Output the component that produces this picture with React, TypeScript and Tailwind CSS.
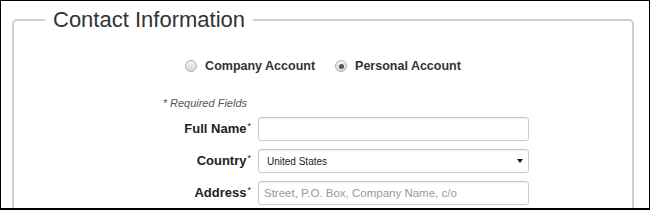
import React from 'react';

const Radio = ({ checked }: { checked?: boolean }) => (
  <span className="flex h-[12px] w-[12px] items-center justify-center rounded-full border border-[#b0b0b0] bg-gradient-to-b from-[#f4f4f4] to-[#d9d9d9]">
    {checked && <span className="h-[5px] w-[5px] rounded-full bg-[#555]" />}
  </span>
);

const Label = ({ text }: { text: string }) => (
  <label className="w-[237px] text-right text-[13px] font-bold text-[#222]">
    {text}
    <span className="relative top-[-4px] ml-[1px] text-[9px] font-normal">*</span>
  </label>
);

const inputClass =
  'h-[24px] w-[271px] rounded-[3px] border border-[#ccc] bg-white shadow-[inset_0_1px_1px_rgba(0,0,0,0.075)] outline-none';

export default function App() {
  return (
    <div
      className="h-[210px] w-[650px] overflow-hidden border-t border-r border-l border-b-2 border-black bg-white"
      style={{ fontFamily: '"Liberation Sans", Arial, sans-serif' }}
    >
      <fieldset className="ml-[11px] mt-[5px] h-[260px] w-[622px] rounded-[5px] border-2 border-[#cfcfcf]">
        <legend className="ml-[31px] px-2 text-[22px] leading-[27px] text-[#333]">Contact Information</legend>

        <div className="mt-[23px] flex h-[20px] items-center justify-center text-[12.5px] font-bold text-[#333]">
          <div className="flex items-center gap-[8px]">
            <Radio />
            <span>Company Account</span>
          </div>
          <div className="ml-[20px] flex items-center gap-[8px]">
            <Radio checked />
            <span>Personal Account</span>
          </div>
        </div>

        <div className="mt-[20px] w-[233px] text-right text-[11px] italic leading-[14px] text-[#555]">
          * Required Fields
        </div>

        <div className="mt-[7px] flex flex-col gap-[8px]">
          <div className="flex items-center">
            <Label text="Full Name" />
            <input className={`ml-[7px] px-[6px] ${inputClass}`} />
          </div>
          <div className="flex items-center">
            <Label text="Country" />
            <div className={`ml-[7px] flex items-center justify-between pl-[8px] pr-[5px] text-[10px] text-[#222] ${inputClass}`}>
              <span>United States</span>
              <svg width="6" height="4" viewBox="0 0 6 4">
                <path d="M0 0 H6 L3 4 Z" fill="#111" />
              </svg>
            </div>
          </div>
          <div className="flex items-center">
            <Label text="Address" />
            <input
              placeholder="Street, P.O. Box, Company Name, c/o"
              className={`ml-[7px] px-[5px] text-[11.5px] placeholder:text-[#999] ${inputClass}`}
            />
          </div>
        </div>
      </fieldset>
    </div>
  );
}
